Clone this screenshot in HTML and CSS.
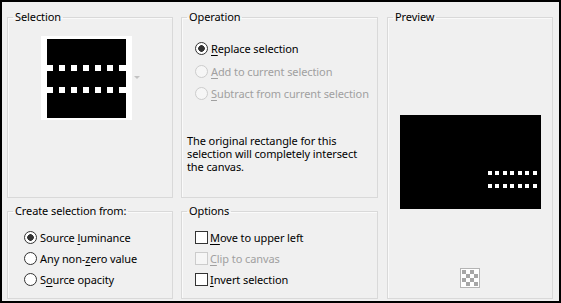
FILE: index.html
```html
<!DOCTYPE html>
<html lang="en">
<head>
    <meta charset="UTF-8">
    <title>Promote selection</title>
    <link rel="stylesheet" href="styles.css">
</head>
<body>
<div class="dialog">
    <fieldset class="group sel">
        <legend>Selection</legend>
        <div class="thumb-row">
            <div class="thumb">
                <svg width="79" height="79" viewBox="0 0 79 79">
                    <rect width="79" height="79" fill="#000"/>
                    <g fill="#fff">
                        <rect x="0" y="26" width="6" height="6"/><rect x="12" y="26" width="6" height="6"/>
                        <rect x="24" y="26" width="6" height="6"/><rect x="36" y="26" width="6" height="6"/>
                        <rect x="48" y="26" width="6" height="6"/><rect x="60" y="26" width="6" height="6"/>
                        <rect x="72" y="26" width="7" height="6"/>
                        <rect x="0" y="48" width="6" height="6"/><rect x="12" y="48" width="6" height="6"/>
                        <rect x="24" y="48" width="6" height="6"/><rect x="36" y="48" width="6" height="6"/>
                        <rect x="48" y="48" width="6" height="6"/><rect x="60" y="48" width="6" height="6"/>
                        <rect x="72" y="48" width="7" height="6"/>
                    </g>
                </svg>
            </div>
            <svg class="drop" width="6" height="4" viewBox="0 0 6 4"><path d="M0 0h6L3 3z" fill="#c2c2c2"/></svg>
        </div>
    </fieldset>

    <fieldset class="group op">
        <legend>Operation</legend>
        <div class="opts">
            <label class="opt"><input type="radio" name="op" checked><span><u>R</u>eplace selection</span></label>
            <label class="opt off"><input type="radio" name="op" disabled><span><u>A</u>dd to current selection</span></label>
            <label class="opt off"><input type="radio" name="op" disabled><span><u>S</u>ubtract from current selection</span></label>
        </div>
        <p class="note">
            <span>The original rectangle for this</span>
            <span>selection will completely intersect</span>
            <span>the canvas.</span>
        </p>
    </fieldset>

    <fieldset class="group preview">
        <legend>Preview</legend>
        <div class="preview-img">
            <svg width="141" height="94" viewBox="0 0 141 94">
                <rect width="141" height="94" fill="#000"/>
                <g fill="#fff">
                    <rect x="88" y="56" width="4" height="4"/><rect x="95" y="56" width="4" height="4"/>
                    <rect x="103" y="56" width="4" height="4"/><rect x="110" y="56" width="4" height="4"/>
                    <rect x="118" y="56" width="4" height="4"/><rect x="125" y="56" width="4" height="4"/>
                    <rect x="133" y="56" width="4" height="4"/>
                    <rect x="88" y="69" width="4" height="4"/><rect x="95" y="69" width="4" height="4"/>
                    <rect x="103" y="69" width="4" height="4"/><rect x="110" y="69" width="4" height="4"/>
                    <rect x="118" y="69" width="4" height="4"/><rect x="125" y="69" width="4" height="4"/>
                    <rect x="133" y="69" width="4" height="4"/>
                </g>
            </svg>
        </div>
        <div class="checker">
            <svg width="20" height="20" viewBox="0 0 20 20">
                <rect x="0.5" y="0.5" width="19" height="19" fill="#fff" stroke="#b4b4b4"/>
                <g fill="#a6a6a6">
                    <rect x="2" y="2" width="4" height="4"/><rect x="10" y="2" width="4" height="4"/>
                    <rect x="6" y="6" width="4" height="4"/><rect x="14" y="6" width="4" height="4"/>
                    <rect x="2" y="10" width="4" height="4"/><rect x="10" y="10" width="4" height="4"/>
                    <rect x="6" y="14" width="4" height="4"/><rect x="14" y="14" width="4" height="4"/>
                </g>
            </svg>
        </div>
    </fieldset>

    <fieldset class="group create">
        <legend>Create selection from:</legend>
        <div class="opts small">
            <label class="opt"><input type="radio" name="src" checked><span>Source <u>l</u>uminance</span></label>
            <label class="opt"><input type="radio" name="src"><span>Any non-<u>z</u>ero value</span></label>
            <label class="opt"><input type="radio" name="src"><span>S<u>o</u>urce opacity</span></label>
        </div>
    </fieldset>

    <fieldset class="group options">
        <legend>Options</legend>
        <div class="opts small">
            <label class="opt"><input type="checkbox"><span><u>M</u>ove to upper left</span></label>
            <label class="opt off"><input type="checkbox" disabled><span><u>C</u>lip to canvas</span></label>
            <label class="opt"><input type="checkbox"><span><u>I</u>nvert selection</span></label>
        </div>
    </fieldset>
</div>
</body>
</html>
```

FILE: styles.css
```css
body {
    margin: 0;
    font-family: "Noto Sans", sans-serif;
    font-size: 11px;
    letter-spacing: -0.1px;
    color: #000;
}

.dialog {
    width: 561px;
    height: 303px;
    box-sizing: border-box;
    border: 2px solid #000;
    background-color: #f0f0f0;
    padding: 8px 0 3px 5px;
    display: grid;
    grid-template-columns: 166px 197px 167px;
    grid-template-rows: 188px 95px;
    column-gap: 8px;
    row-gap: 6px;
}

.group {
    margin: 0;
    padding: 0;
    min-width: 0;
    border: 1px solid #d9d9d9;
    box-shadow: inset 1px 1px 0 #fafafa;
}

.group legend {
    margin-left: 5px;
    padding: 0 2px;
    line-height: 14px;
}

.sel { grid-column: 1; grid-row: 1; }
.op { grid-column: 2; grid-row: 1; }
.preview { grid-column: 3; grid-row: 1 / span 2; margin-left: 1px; }
.create { grid-column: 1; grid-row: 2; }
.options { grid-column: 2; grid-row: 2; }

.thumb-row {
    display: flex;
    justify-content: center;
    align-items: flex-start;
    margin-top: 12px;
}

.thumb {
    background: #fff;
    padding: 3px 6px 2px 6px;
    line-height: 0;
}

.drop {
    margin: 40px 0 0 2px;
}

.opts {
    margin-top: 13px;
    padding-left: 13px;
}

.opt {
    display: flex;
    align-items: center;
    height: 22px;
    white-space: nowrap;
}

.opts .opt:first-child {
    height: 23px;
}

.opts.small {
    margin-top: 9px;
}

.opts.small .opt {
    height: 21px;
}

.create .opts {
    padding-left: 16px;
}

.opt input {
    appearance: none;
    -webkit-appearance: none;
    width: 13px;
    height: 13px;
    margin: 0 3px 0 0;
    border: 1px solid #333;
    background: #fff;
    box-sizing: border-box;
}

.opt input[type=radio] {
    border-radius: 50%;
}

.opt input[type=radio]:checked {
    background: radial-gradient(circle, #333 0 3px, #fff 3.6px);
}

.opt input[type=checkbox] {
    margin-right: 2px;
}

.opt.off {
    color: #a0a0a0;
}

.opt.off input {
    border-color: #cccccc;
    background: #f6f6f6;
}

.opt u {
    text-underline-offset: 2px;
}

.note {
    margin: 30px 0 0 5px;
    display: flex;
    flex-direction: column;
    white-space: nowrap;
}

.note span {
    height: 13px;
    line-height: 13px;
}

.preview-img {
    display: flex;
    justify-content: center;
    margin-top: 91px;
    line-height: 0;
}

.checker {
    display: flex;
    justify-content: center;
    margin-top: 59px;
    line-height: 0;
}
```
